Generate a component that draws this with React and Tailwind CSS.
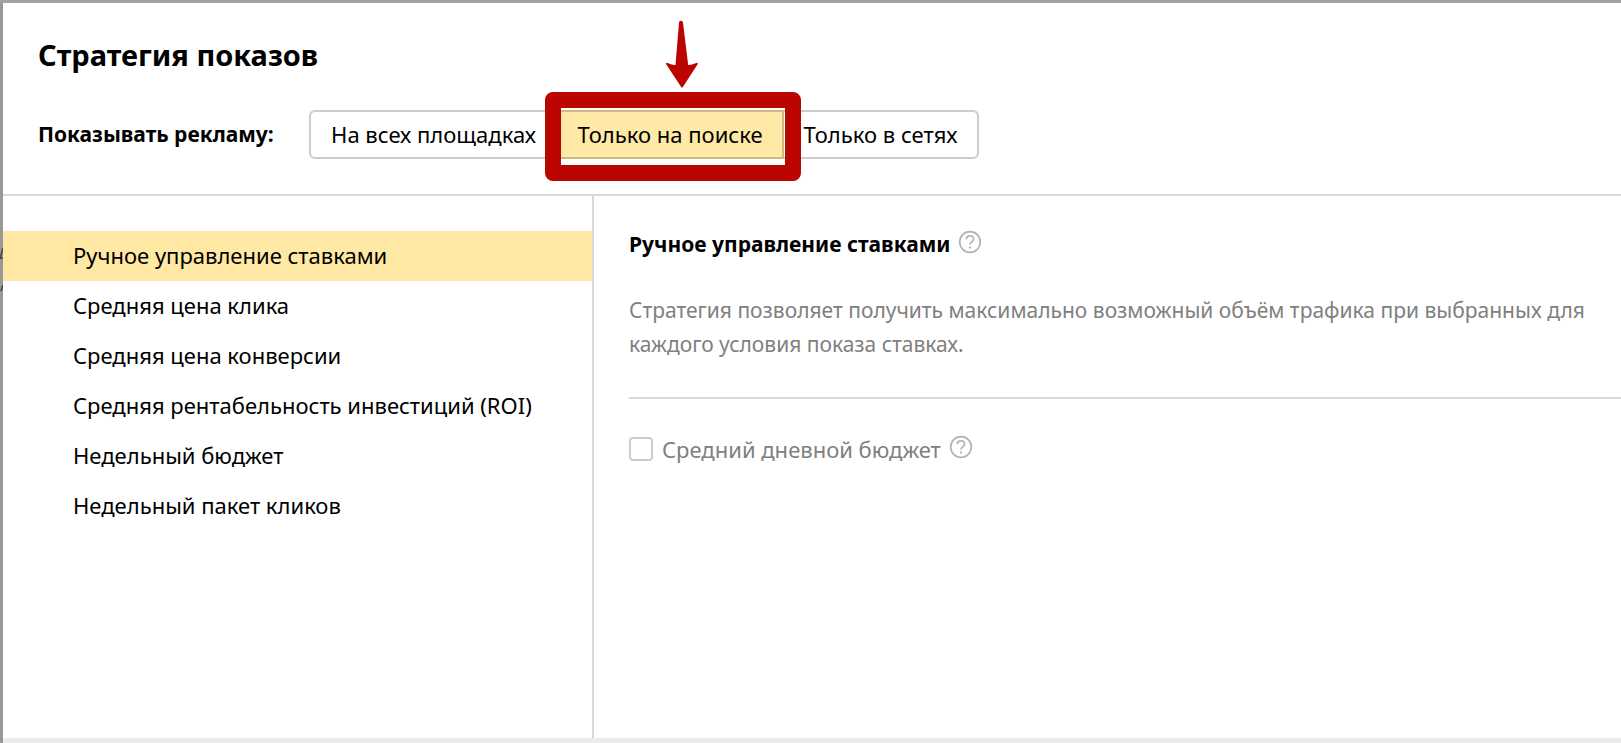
const strategies = [
  "Ручное управление ставками",
  "Средняя цена клика",
  "Средняя цена конверсии",
  "Средняя рентабельность инвестиций (ROI)",
  "Недельный бюджет",
  "Недельный пакет кликов",
];

function HelpButton({ label }) {
  return (
    <button type="button" aria-label={label} className="mb-1 shrink-0 text-[#b3b3b3]">
      <svg width="24" height="24" viewBox="0 0 24 24" fill="none" stroke="currentColor" strokeWidth="1.7">
        <circle cx="12" cy="12" r="10.3" />
        <path d="M8.4 9.3c0-2.1 1.5-3.5 3.6-3.5s3.6 1.3 3.6 3.2c0 2.7-3.6 2.7-3.6 5.6" />
        <path d="M12 16.4v2" strokeWidth="2" />
      </svg>
    </button>
  );
}

function Callout() {
  return (
    <>
      <span className="pointer-events-none absolute -top-[18px] -right-[17px] -bottom-[22px] -left-[11px] z-10 rounded-lg border-16 border-[#ba0500]" />
      <svg
        className="pointer-events-none absolute -top-[90px] left-[109px] z-10"
        width="34"
        height="68"
        viewBox="0 0 34 68"
        fill="#ba0500"
        stroke="#ba0500"
        strokeWidth="2"
        strokeLinejoin="round"
      >
        <path d="M15 2.5Q16 .8 17 2.5L22.3 46.2Q27.5 46 31.8 43.8L17 66.5L2 43.8Q6 46 11.4 46.2Z" />
      </svg>
    </>
  );
}

export default function App() {
  return (
    <div className="flex h-screen min-h-[600px] flex-col overflow-hidden border-t-3 border-[#a3a3a3] bg-white font-['Noto_Sans','Open_Sans',sans-serif] text-[22px] leading-[34px] text-black">
      <div className="flex min-h-0 flex-1">
        <div className="w-[3px] shrink-0 bg-[#989898]">
          <svg className="block h-full w-full" aria-hidden="true">
            <path d="M0 256L3 245M0 255H3M1 288L3 282" stroke="#444" strokeWidth="1.5" fill="none" />
          </svg>
        </div>
        <main className="flex min-w-0 flex-1 flex-col">
          <header className="flex flex-col gap-[33px] border-b-2 border-[#d9d9d9] px-[35px] pt-[30px] pb-[35px]">
            <h1 className="text-[29px] leading-[44px] font-bold">Стратегия показов</h1>
            <div className="flex items-center gap-[35px]">
              <span id="placement" className="w-[236px] pb-0.5 text-[21px] font-bold whitespace-nowrap">Показывать рекламу:</span>
              <div role="group" aria-labelledby="placement" className="flex h-[49px] whitespace-nowrap">
                <button type="button" className="w-[247px] rounded-l-md border-2 border-r-0 border-[#ccc] pb-0.5">
                  На всех площадках
                </button>
                <div className="relative w-[228px]">
                  <button type="button" aria-pressed="true" className="h-full w-full border-2 border-[#ccb984] bg-[#ffe9a6] pb-0.5">
                    Только на поиске
                  </button>
                  <Callout />
                </div>
                <button type="button" className="w-[195px] rounded-r-md border-2 border-l-0 border-[#ccc] pb-0.5">
                  Только в сетях
                </button>
              </div>
            </div>
          </header>
          <div className="flex min-h-0 flex-1">
            <nav className="w-[591px] shrink-0 border-r-2 border-[#d9d9d9] pt-[35px]">
              <ul>
                {strategies.map((name, i) => (
                  <li key={name}>
                    <a href="#" className={i === 0 ? "block bg-[#ffe8a4] pt-[7px] pr-8 pb-[9px] pl-[70px]" : "block pt-[7px] pr-8 pb-[9px] pl-[70px]"}>
                      {name}
                    </a>
                  </li>
                ))}
              </ul>
            </nav>
            <section className="min-w-0 flex-1 pt-[31px] pl-[35px]">
              <div className="flex items-center gap-2">
                <h2 className="text-[21px] font-bold">Ручное управление ставками</h2>
                <HelpButton label="Справка о стратегии" />
              </div>
              <p className="mt-8 border-b-2 border-[#d9d9d9] pb-9 text-[21px] text-[#808080]">
                Стратегия позволяет получить максимально возможный объём трафика при выбранных для каждого условия показа ставках.
              </p>
              <div className="mt-[33px] flex items-center gap-2 text-[#808080]">
                <label className="flex items-center gap-[9px]">
                  <input type="checkbox" className="size-6 appearance-none rounded border-2 border-[#ccc] bg-white" />
                  Средний дневной бюджет
                </label>
                <HelpButton label="Справка о дневном бюджете" />
              </div>
            </section>
          </div>
          <footer className="h-[5px] shrink-0 bg-[#ececec]" />
        </main>
      </div>
    </div>
  );
}
